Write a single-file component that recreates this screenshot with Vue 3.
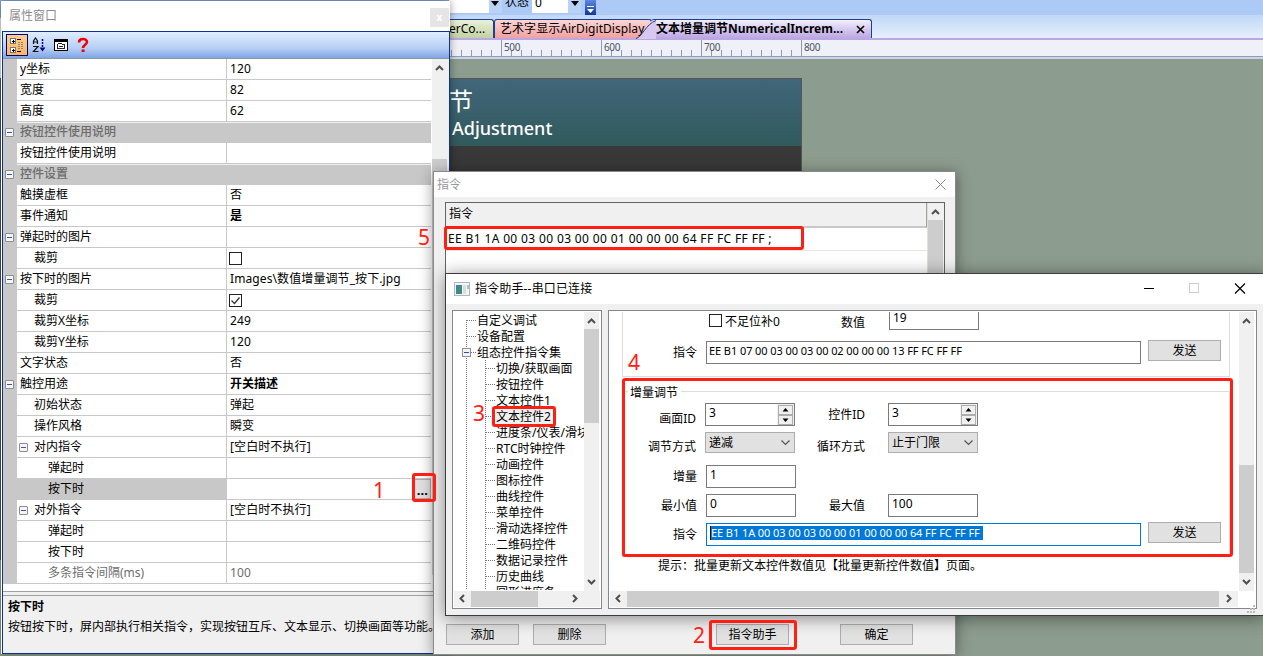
<template>
  <div class="desktop">
    <!-- designer behind the dialogs -->
    <div class="designer">
      <div class="toolbar">
        <div class="combo-end"><svg width="8" height="5"><path d="M0 0h8L4 5z" /></svg></div>
        <span class="state-label">状态</span>
        <div class="state-box">0</div>
        <div class="combo-end"><svg width="8" height="5"><path d="M0 0h8L4 5z" /></svg></div>
        <div class="toolbar-cap">
          <svg width="7" height="8"><path d="M0 0.5h7" stroke="#fff" /><path d="M0 3h7L3.5 7z" fill="#fff" /></svg>
        </div>
      </div>
      <div class="tabs">
        <div class="tab green">erCo...</div>
        <div class="tab pink"><span>艺术字显示AirDigitDisplay</span></div>
        <div class="tab active">
          <svg class="slant" width="20" height="19"><path d="M0 19C5 19 11 4 19 .5H20V19z" fill="#d6c8ee" /><path d="M0 18.5C6 17 10 4 20 .5" fill="none" stroke="#1c3f94" /></svg>
          <span class="tab-text">文本增量调节NumericalIncrem...</span>
          <svg width="9" height="9"><path d="M1 1l7 7M8 1l-7 7" stroke="#000" stroke-width="1.6" /></svg>
        </div>
      </div>
      <svg class="ruler" width="814" height="19">
        <rect width="814" height="17" fill="#f0f1f8" />
        <path d="M0 16.5H814" stroke="#8d9cb8" />
        <path d="M0 18H814" stroke="#ccd4e6" stroke-width="2" />
        <path v-for="t in ticks" :key="t.x" :d="`M${t.x} ${t.top}V16`" stroke="#8f9bb0" />
        <text v-for="n in marks" :key="n.value" :x="n.x" y="11">{{ n.value }}</text>
      </svg>
      <div class="canvas">
        <div class="screen">
          <div class="screen-head">
            <div class="screen-cn">节</div>
            <div class="screen-en">Adjustment</div>
          </div>
        </div>
      </div>
    </div>

    <div class="icon-strip"></div>

    <!-- property window -->
    <div class="props">
      <div class="props-title"><span>属性窗口</span><b>x</b></div>
      <div class="props-frame">
        <div class="props-tools">
          <div class="tool on">
            <svg width="16" height="16" shape-rendering="crispEdges">
              <path d="M1.5 1.5h5v5h-5zM1.5 10.5h5v5h-5z" fill="#fff" stroke="#777" />
              <path d="M3 4h3M4.5 2.5v3M3 13h3M4.5 11.5v3" stroke="#000" />
              <path d="M8 2.5h4M8 14.5h4" stroke="#000" />
              <path d="M9 5.5h6M9 7.5h6M9 9.5h6M9 11.5h6" stroke="#888" stroke-dasharray="2 1" />
            </svg>
          </div>
          <div class="tool">
            <svg width="16" height="16">
              <path d="M2.5 7V4l2-3 2 3v3M2.5 5h4M2 9.5h5L2.5 14.5H7.5" fill="none" stroke="#111" stroke-width="1.2" />
              <path d="M11.5 2v9" stroke="#00008b" stroke-width="1.5" stroke-dasharray="2 1" />
              <path d="M8.5 10.5h6l-3 4z" fill="#00008b" />
            </svg>
          </div>
          <div class="tool">
            <svg width="16" height="16" shape-rendering="crispEdges">
              <path d="M1 2h14v12H1z" fill="#000" /><path d="M2 5h12v8H2z" fill="#fff" />
              <path d="M4.5 7.5l1-1h3l1 1h2v4h-7z" fill="#fff" stroke="#222" /><path d="M6 9.5h4" stroke="#222" />
            </svg>
          </div>
          <div class="tool">
            <svg width="14" height="16"><path d="M3 5.5C3 1 11 1 11 5C11 7.5 7 8 7 11" fill="none" stroke="#f00000" stroke-width="2.6" /><path d="M5.6 12.5h3v2.5h-3z" fill="#f00000" /></svg>
          </div>
        </div>
        <div class="grid-wrap">
          <div class="grid">
            <div v-for="(row, i) in rows" :key="i" class="row" :class="{ cat: row.cat, sel: row.sel, dim: row.dim }">
              <div class="gutter"><i v-if="row.open" class="minus"></i></div>
              <div class="name" :class="'lv' + (row.level || 0)"><i v-if="row.subOpen" class="minus"></i>{{ row.name }}</div>
              <div v-if="!row.cat" class="value" :class="{ bold: row.bold }">
                <svg v-if="row.check !== undefined" width="13" height="13">
                  <rect x=".5" y=".5" width="12" height="12" fill="#fff" stroke="#222" />
                  <path v-if="row.check" d="M2.5 6.5l3 3 5-6" fill="none" stroke="#333" stroke-width="1.3" />
                </svg>
                {{ row.value }}
                <span v-if="row.sel" class="dots">...</span>
              </div>
            </div>
          </div>
          <div class="vbar">
            <svg width="15" height="18"><path d="M4 11l3.5-3.5L11 11" class="arrow" /></svg>
            <div class="props-thumb"></div>
          </div>
        </div>
        <div class="help">
          <b>按下时</b>
          <p>按钮按下时，屏内部执行相关指令，实现按钮互斥、文本显示、切换画面等功能。</p>
        </div>
      </div>
    </div>

    <!-- command list dialog -->
    <div class="dialog cmd">
      <div class="cmd-title">
        <span>指令</span>
        <svg width="11" height="11"><path d="M.5.5l10 10M10.5.5l-10 10" stroke="#888" /></svg>
      </div>
      <div class="cmd-list">
        <div class="cmd-rows">
          <div class="cmd-head">指令</div>
          <div class="cmd-row">EE B1 1A 00 03 00 03 00 00 01 00 00 00 64 FF FC FF FF ;</div>
        </div>
        <div class="vbar cmd-bar">
          <svg width="15" height="17"><path d="M4 11l3.5-3.5L11 11" class="arrow" /></svg>
          <div class="thumb"></div>
        </div>
      </div>
      <div class="cmd-buttons">
        <button>添加</button>
        <button>删除</button>
        <button class="helper-btn">指令助手</button>
        <button class="ok-btn">确定</button>
      </div>
    </div>

    <!-- command helper dialog -->
    <div class="dialog helper">
      <div class="helper-title">
        <svg width="16" height="14">
          <rect x=".5" y=".5" width="15" height="13" fill="#f4f4f4" stroke="#b0b6ba" />
          <rect x="2" y="3" width="6" height="9" fill="#3c8f7c" /><rect x="2" y="3" width="3" height="4" fill="#4a79b8" />
          <rect x="9" y="3" width="3" height="9" fill="#dcdcdc" /><rect x="13" y="3" width="2" height="4" fill="#9fc4dc" />
        </svg>
        <span>指令助手--串口已连接</span>
        <svg class="win-btns" width="102" height="11">
          <path d="M0 5.5h10" stroke="#000" /><rect x="45.5" y=".5" width="9" height="9" fill="none" stroke="#ccc" />
          <path d="M91 .5l10 10M101 .5l-10 10" stroke="#000" stroke-width="1.2" />
        </svg>
      </div>
      <div class="helper-body">
        <div class="panel tree">
          <div class="pane-top">
            <div class="tree-list">
              <div v-for="(item, i) in tree" :key="item" class="node">
                <svg :width="i < 3 ? 24 : 43" height="16" shape-rendering="crispEdges">
                  <path :d="i === 0 ? 'M12.5 8V16' : 'M12.5 0V16'" class="dotline" />
                  <path v-if="i < 3" d="M13 8.5H22" class="dotline" />
                  <path v-else d="M31.5 0V16M32 8.5H41" class="dotline" />
                  <g v-if="i === 2">
                    <rect x="8.5" y="4.5" width="8" height="8" fill="#f4f4f4" stroke="#919191" />
                    <path d="M10 8.5h5" stroke="#3050a0" />
                  </g>
                </svg>
                <span :class="{ picked: i === 6 }">{{ item }}</span>
              </div>
            </div>
            <div class="vbar">
              <svg width="15" height="17"><path d="M4 11l3.5-3.5L11 11" class="arrow" /></svg>
              <div class="thumb tree-thumb"></div>
              <svg class="down" width="15" height="17"><path d="M4 6l3.5 3.5L11 6" class="arrow" /></svg>
            </div>
          </div>
          <div class="hbar">
            <svg width="17" height="15"><path d="M10 4L6.5 7.5L10 11" class="arrow" /></svg>
            <div class="thumb tree-hthumb"></div>
            <svg class="right" width="17" height="15"><path d="M6 4l3.5 3.5L6 11" class="arrow" /></svg>
          </div>
        </div>

        <div class="panel form">
          <div class="pane-top">
            <div class="form-area">
              <div class="group upper">
                <div class="line l-num">
                  <svg class="box" width="13" height="13"><rect x=".5" y=".5" width="12" height="12" fill="#fff" stroke="#222" /></svg>
                  <span class="box-text">不足位补0</span>
                  <label class="mid">数值</label>
                  <div class="field cut">19</div>
                </div>
                <div class="line l-cmd">
                  <label>指令</label>
                  <div class="field wide">EE B1 07 00 03 00 03 00 02 00 00 00 13 FF FC FF FF</div>
                  <button>发送</button>
                </div>
              </div>
              <fieldset class="group inc">
                <legend>增量调节</legend>
                <div class="line l-id">
                  <label class="low">画面ID</label>
                  <div class="field spin">3<span class="spinner"><svg v-for="d in arrows" :key="d" width="15" height="10"><rect x=".5" y=".5" width="14" height="9" fill="#f0f0f0" stroke="#adadad" /><path :d="d" /></svg></span></div>
                  <label class="second">控件ID</label>
                  <div class="field spin">3<span class="spinner"><svg v-for="d in arrows" :key="d" width="15" height="10"><rect x=".5" y=".5" width="14" height="9" fill="#f0f0f0" stroke="#adadad" /><path :d="d" /></svg></span></div>
                </div>
                <div class="line l-mode">
                  <label class="low">调节方式</label>
                  <div class="select">递减<svg width="9" height="6"><path d="M.5.5l4 4 4-4" /></svg></div>
                  <label class="second low">循环方式</label>
                  <div class="select">止于门限<svg width="9" height="6"><path d="M.5.5l4 4 4-4" /></svg></div>
                </div>
                <div class="line l-step">
                  <label>增量</label>
                  <div class="field">1</div>
                </div>
                <div class="line l-range">
                  <label>最小值</label>
                  <div class="field">0</div>
                  <label class="second max">最大值</label>
                  <div class="field">100</div>
                </div>
                <div class="line l-out">
                  <label>指令</label>
                  <div class="field wide focus"><span>EE B1 1A 00 03 00 03 00 00 01 00 00 00 64 FF FC FF FF&nbsp;</span></div>
                  <button>发送</button>
                </div>
              </fieldset>
              <p class="hint">提示：批量更新文本控件数值见【批量更新控件数值】页面。</p>
            </div>
            <div class="vbar">
              <svg width="15" height="17"><path d="M4 11l3.5-3.5L11 11" class="arrow" /></svg>
              <div class="thumb form-thumb"></div>
              <svg class="down" width="15" height="17"><path d="M4 6l3.5 3.5L11 6" class="arrow" /></svg>
            </div>
          </div>
          <div class="hbar">
            <svg width="17" height="15"><path d="M10 4L6.5 7.5L10 11" class="arrow" /></svg>
            <div class="thumb form-hthumb"></div>
            <svg class="right" width="17" height="15"><path d="M6 4l3.5 3.5L6 11" class="arrow" /></svg>
          </div>
        </div>
      </div>
      <svg class="grip" width="8" height="8"><path d="M6 0h2v2H6zM3 3h2v2H3zM6 3h2v2H6zM0 6h2v2H0zM3 6h2v2H3zM6 6h2v2H6z" fill="#bbb" /></svg>
    </div>

    <!-- step marks over the windows -->
    <div class="mark m1"></div>
    <div class="mark m2"></div>
    <div class="mark m3"></div>
    <div class="mark m4"></div>
    <div class="mark m5"></div>
    <div v-for="n in 5" :key="n" class="step" :class="'s' + n">{{ n }}</div>
  </div>
</template>

<script setup>
const rows = [
  { name: 'y坐标', value: '120' },
  { name: '宽度', value: '82' },
  { name: '高度', value: '62' },
  { name: '按钮控件使用说明', cat: true, open: true },
  { name: '按钮控件使用说明' },
  { name: '控件设置', cat: true, open: true },
  { name: '触摸虚框', value: '否' },
  { name: '事件通知', value: '是', bold: true },
  { name: '弹起时的图片', open: true },
  { name: '裁剪', level: 1, check: false },
  { name: '按下时的图片', value: 'Images\\数值增量调节_按下.jpg', open: true },
  { name: '裁剪', level: 1, check: true },
  { name: '裁剪X坐标', level: 1, value: '249' },
  { name: '裁剪Y坐标', level: 1, value: '120' },
  { name: '文字状态', value: '否' },
  { name: '触控用途', value: '开关描述', bold: true, open: true },
  { name: '初始状态', level: 1, value: '弹起' },
  { name: '操作风格', level: 1, value: '瞬变' },
  { name: '对内指令', level: 1, value: '[空白时不执行]', subOpen: true },
  { name: '弹起时', level: 2 },
  { name: '按下时', level: 2, sel: true },
  { name: '对外指令', level: 1, value: '[空白时不执行]', subOpen: true },
  { name: '弹起时', level: 2 },
  { name: '按下时', level: 2 },
  { name: '多条指令间隔(ms)', level: 2, value: '100', dim: true }
]

const tree = [
  '自定义调试', '设备配置', '组态控件指令集', '切换/获取画面', '按钮控件', '文本控件1',
  '文本控件2', '进度条/仪表/滑块', 'RTC时钟控件', '动画控件', '图标控件', '曲线控件',
  '菜单控件', '滑动选择控件', '二维码控件', '数据记录控件', '历史曲线', '圆形进度条'
]

// up and down triangles of the number fields
const arrows = ['M4.5 6.5h6L7.5 3z', 'M4.5 3.5h6L7.5 7z']

// ruler: one tick every 10 units, a long one every 100
const ticks = []
for (let i = 0; i <= 35; i++) {
  ticks.push({ x: 2.5 + i * 10, top: i % 10 === 5 ? 0 : 10 })
}
const marks = [500, 600, 700, 800].map((value, i) => ({ value, x: 55 + i * 100 }))
</script>

<style>
body {
  overflow: hidden;
}
</style>

<style scoped>
.desktop {
  position: relative;
  width: 1263px;
  height: 656px;
  overflow: hidden;
  background: #8c9c8e;
  color: #000;
  font: 12px/16px "Noto Sans", "Noto Sans CJK SC", sans-serif;
  white-space: nowrap;
}

.desktop * {
  box-sizing: border-box;
}

svg {
  display: block;
  flex: none;
}

p {
  margin: 0;
}

/* designer */
.designer {
  margin-left: 449px;
}

.toolbar {
  display: flex;
  height: 16px;
  background: #adcaf6;
  border-bottom: 1px solid #c4d8f5;
  overflow: hidden;
}

.toolbar .combo-end {
  width: 13px;
  height: 13px;
  padding: 1px 3px;
  background: #b9d3f7;
}

.toolbar .combo-end:first-child {
  width: 53px;
  padding-left: 42px;
  background: linear-gradient(90deg, #fff 40px, #b9d3f7 40px);
}

.state-label {
  margin: -6px 3px 0 3px;
}

.state-box {
  width: 36px;
  height: 13px;
  padding-left: 3px;
  line-height: 6px;
  background: #fff;
}

.toolbar-cap {
  width: 11px;
  height: 16px;
  margin-left: 4px;
  padding: 6px 2px;
  background: linear-gradient(#5d8ae0, #0b318e);
}

.tabs {
  display: flex;
  height: 24px;
  padding-top: 3px;
  background: linear-gradient(#c1d8f7, #e6effc);
  border-bottom: 2px solid #bba7e3;
}

.tab {
  height: 19px;
  border: 1px solid #1c3f94;
  border-bottom: 0;
  border-radius: 3px 3px 0 0;
  line-height: 18px;
}

.tab.green {
  width: 45px;
  border-left: 0;
  border-radius: 0 3px 0 0;
  background: linear-gradient(#eaf1da, #c1d2a0);
}

.tab.pink {
  width: 158px;
  padding-left: 5px;
  overflow: hidden;
  background: linear-gradient(#fbd6d6, #f1a0a0);
}

.tab.pink span {
  letter-spacing: 0.05px;
}

.tab.active {
  display: flex;
  align-items: center;
  width: 221px;
  margin-left: -1px;
  border-left: 0;
  background: linear-gradient(#f2effb, #bba7e3);
  font-weight: bold;
}

.slant {
  margin: 0 -12px 0 -15px;
}

.tab-text {
  width: 200px;
  margin-left: 12px;
}

.ruler text {
  font-size: 10px;
  letter-spacing: -0.4px;
  fill: #4b5563;
}

.canvas {
  padding-top: 19px;
}

.screen {
  width: 353px;
  height: 200px;
  border: 1px solid #555;
  border-left: 0;
  background: #383838;
}

.screen-head {
  height: 67px;
  padding-top: 5px;
  background: linear-gradient(#41667a, #315a5c);
  color: #fff;
}

.screen-cn {
  height: 31px;
  font-size: 24px;
  line-height: 34px;
}

.screen-en {
  padding-left: 3px;
  font-size: 18px;
  font-weight: 500;
  line-height: 26px;
}

.icon-strip {
  position: absolute;
  left: 0;
  top: 0;
  width: 449px;
  height: 656px;
  background: linear-gradient(#86a4d8 0 18px, #dde8f8 18px 78px, #4a4f57 78px 560px, #8c9c8e 560px);
}

/* property window */
.props {
  position: absolute;
  left: 1px;
  top: 1px;
  width: 449px;
  height: 653px;
  background: #fff;
  box-shadow: 0 0 8px rgba(0, 0, 0, 0.4);
}

.props-title {
  display: flex;
  justify-content: space-between;
  height: 30px;
  padding: 7px 1px 0 8px;
  color: #8e8e8e;
}

.props-title b {
  width: 19px;
  height: 19px;
  background: #e5e5e5;
  color: #fff;
  font-size: 10px;
  line-height: 18px;
  text-align: center;
}

.props-frame {
  display: flex;
  flex-direction: column;
  height: 623px;
  margin-left: 1px;
  border: 1px solid #0a3494;
  background: #f0f0f0;
}

.props-tools {
  display: flex;
  align-items: center;
  gap: 0;
  height: 27px;
  padding-left: 3px;
  border-bottom: 1px solid #8a95a8;
  background: linear-gradient(#e0edfe, #b8d0f5 60%, #7fa6e6);
}

.tool {
  display: flex;
  align-items: center;
  justify-content: center;
  width: 22px;
  height: 22px;
}

.tool.on {
  border: 1px solid #00007f;
  background: linear-gradient(#ffd08e, #ffb45c);
}

.grid-wrap {
  display: flex;
  height: 533px;
  border-bottom: 1px solid #a0a0a0;
  background: #fff;
}

.grid {
  width: 428px;
  margin-right: 1px;
}

.row {
  display: flex;
  height: 21px;
}

.gutter {
  display: flex;
  align-items: center;
  width: 14px;
  padding-left: 2px;
  background: #c8c8c8;
}

.minus {
  flex: none;
  width: 9px;
  height: 9px;
  border: 1px solid #8d8d8d;
  border-radius: 1px;
  background: linear-gradient(#3b58a8, #3b58a8) center / 5px 1px no-repeat #f5f5f5;
}

.name {
  width: 209px;
  padding-left: 3px;
  border-bottom: 1px solid #c8c8c8;
  line-height: 20px;
}

.name .minus {
  display: inline-block;
  margin: 0 6px -1px -15px;
}

.name.lv1 {
  padding-left: 17px;
}

.name.lv2 {
  padding-left: 31px;
}

.value {
  display: flex;
  align-items: center;
  flex: 1;
  padding-left: 3px;
  border-left: 1px solid #c8c8c8;
  border-bottom: 1px solid #c8c8c8;
  letter-spacing: 0.1px;
}

.value svg {
  margin: 1px 0 0 -1px;
}

.bold {
  font-weight: bold;
  letter-spacing: 0;
}

.dots {
  width: 17px;
  height: 20px;
  margin-left: auto;
  border: 1px solid #adadad;
  background: #e1e1e1;
  font-size: 13px;
  font-weight: bold;
  line-height: 20px;
  text-align: center;
}

.cat .name {
  flex: 1;
  border-top: 1px solid #f0f0f0;
  border-bottom: 0;
  background: #c8c8c8;
  color: #6d6d6d;
  font-weight: 500;
  line-height: 18px;
}

.sel .name {
  background: #c8c8c8;
}

.dim {
  color: #6d6d6d;
}

.vbar {
  display: flex;
  flex-direction: column;
  flex: none;
  width: 17px;
  background: #f0f0f0;
}

.arrow {
  fill: none;
  stroke: #505050;
  stroke-width: 2;
}

.thumb {
  flex: none;
  background: #cdcdcd;
}

.props-thumb {
  height: 416px;
  margin: 82px 2px 0 0;
  background: #cdcdcd;
}

.help {
  flex: 1;
  margin-top: 3px;
  padding: 3px 5px;
  border-top: 1px solid #a0a0a0;
}

.help p {
  margin-top: 4px;
}

/* dialogs */
.dialog {
  position: absolute;
  background: #f0f0f0;
}

.cmd {
  left: 433px;
  top: 171px;
  width: 523px;
  height: 484px;
  border: 1px solid #8a8a8a;
  box-shadow: 0 2px 14px rgba(0, 0, 0, 0.4);
}

.cmd-title {
  display: flex;
  align-items: center;
  justify-content: space-between;
  height: 25px;
  padding: 0 9px 0 3px;
  background: #fff;
  color: #999;
}

.cmd-list {
  display: flex;
  height: 400px;
  margin: 5px 10px 0 11px;
  border: 1px solid #646464;
  background: #fff;
}

.cmd-rows {
  flex: 1;
  border-right: 1px solid #e0e0d8;
}

.cmd-head {
  height: 25px;
  padding: 3px;
  border-right: 1px solid #a0a0a0;
  border-bottom: 2px solid #c8c8c8;
  background: #f0f0f0;
}

.cmd-row {
  height: 23px;
  padding-left: 2px;
  border-bottom: 1px solid #e6e6dc;
  letter-spacing: 0.36px;
  line-height: 21px;
}

.cmd-bar {
  width: 16px;
}

.cmd-bar .thumb {
  width: 15px;
  height: 370px;
}

.cmd-buttons {
  display: flex;
  height: 21px;
  margin: 22px 0 0 12px;
}

button {
  width: 73px;
  height: 21px;
  padding: 1px 0 0;
  border: 1px solid #adadad;
  border-radius: 0;
  background: #e1e1e1;
  color: #000;
  font: inherit;
  line-height: 18px;
}

.cmd-buttons button {
  margin-right: 14px;
}

.cmd-buttons .helper-btn {
  margin: 0 51px 0 96px;
}

.cmd-buttons .ok-btn {
  margin: 0;
}

.helper {
  left: 445px;
  top: 273px;
  width: 820px;
  height: 343px;
  border: 1px solid #3c3c3c;
  box-shadow: 0 2px 16px rgba(0, 0, 0, 0.45);
}

.helper-title {
  display: flex;
  align-items: center;
  height: 30px;
  padding: 0 19px 1px 8px;
  background: #fff;
}

.helper-title span {
  margin-left: 5px;
  letter-spacing: 0.15px;
}

.win-btns {
  margin-left: auto;
  margin-right: -1px;
}

.helper-body {
  display: flex;
  gap: 6px;
  padding: 6px 0 0 6px;
}

.panel {
  height: 299px;
  padding: 1px;
  border: 1px solid #828790;
  background: #fff;
}

.pane-top {
  display: flex;
  height: 279px;
}

.tree {
  width: 150px;
}

.tree .vbar,
.form .vbar {
  width: 15px;
}

.tree-list {
  width: 130px;
  height: 278px;
  overflow: hidden;
}

.node {
  display: flex;
  height: 16px;
}

.node span {
  height: 16px;
  margin-left: -1px;
  line-height: 18px;
}

.dotline {
  stroke: #777;
  stroke-dasharray: 1 1;
}

.picked {
  background: #f0f0f0;
}

.tree-thumb {
  height: 94px;
}

.down {
  margin-top: auto;
}

.hbar {
  display: flex;
  height: 16px;
  background: #f0f0f0;
}

.tree-hthumb {
  width: 67px;
}

.hbar .right {
  margin-left: auto;
}

.tree .right {
  margin-right: 16px;
}

.form {
  width: 649px;
}

.form-area {
  width: 629px;
  height: 279px;
  overflow: hidden;
}

.form-thumb {
  height: 108px;
  margin-top: 136px;
}

.form .hbar {
  width: 628px;
}

.form-hthumb {
  width: 592px;
}

.group {
  width: 608px;
  margin: 0 0 0 12px;
  border: 1px solid #dcdcdc;
}

.line {
  display: flex;
  align-items: flex-start;
}

.line label {
  width: 74px;
  margin-right: 9px;
  padding-top: 4px;
  text-align: right;
}

.field {
  width: 90px;
  height: 23px;
  padding-left: 3px;
  border: 1px solid #7a7a7a;
  background: #fff;
  line-height: 18px;
}

.upper {
  height: 65px;
  border-top: 0;
}

.l-num {
  height: 29px;
}

.box {
  margin: 2px 0 0 86px;
}

.box-text {
  width: 82px;
  padding-top: 2px;
  margin-left: 3px;
}

.line .mid {
  width: 58px;
  margin-right: 24px;
  margin-left: 0;
  padding-top: 3px;
}

.field.cut {
  height: 18px;
  border-top: 0;
  line-height: 12px;
}

.field.wide {
  width: 435px;
  padding-left: 2px;
  font-size: 11px;
  letter-spacing: -0.08px;
}

.line button {
  margin: -1px 0 0 7px;
}

.inc {
  height: 172px;
  margin-top: 8px;
  padding: 0;
}

.inc legend {
  height: 13px;
  margin-left: 5px;
  padding: 0 3px 0 2px;
  line-height: 15px;
}

.line .low {
  padding-top: 8px;
}

.line .select ~ .low,
.l-mode .low {
  padding-top: 7px;
}

.l-id,
.l-mode {
  margin-left: -1px;
}

.line .second {
  width: 70px;
  margin-right: 23px;
}

.line .max {
  width: 69px;
}

.l-id {
  height: 29px;
  margin-top: 5px;
}

.spin {
  display: flex;
  justify-content: space-between;
}

.spinner {
  display: flex;
  flex-direction: column;
  width: 17px;
  padding: 1px 0 0 1px;
  background: #f0f0f0;
}

.select {
  display: flex;
  align-items: center;
  justify-content: space-between;
  width: 90px;
  height: 21px;
  padding: 1px 4px 0 3px;
  border: 1px solid #adadad;
  background: #e1e1e1;
}

.select path {
  fill: none;
  stroke: #555;
  stroke-width: 1.2;
}

.l-mode {
  height: 33px;
}

.l-step {
  height: 29px;
}

.l-range {
  height: 29px;
}

.line .field.focus {
  padding: 2px 0 0 3px;
  border-color: #0078d7;
  line-height: 13px;
}

.focus span {
  display: inline-block;
  height: 14px;
  border-left: 1px solid #000;
  background: #0078d7;
  color: #fff;
}

.hint {
  height: 18px;
  margin: 0 0 0 48px;
  line-height: 18px;
}

.grip {
  position: absolute;
  right: 9px;
  bottom: 2px;
}

/* step marks */
.mark {
  position: absolute;
  border: 3px solid #ff2013;
  border-radius: 3px;
}

.m1 {
  left: 412px;
  top: 473px;
  width: 24px;
  height: 29px;
}

.m2 {
  left: 709px;
  top: 620px;
  width: 88px;
  height: 30px;
}

.m3 {
  left: 492px;
  top: 406px;
  width: 64px;
  height: 21px;
}

.m4 {
  left: 622px;
  top: 378px;
  width: 611px;
  height: 179px;
}

.m5 {
  left: 444px;
  top: 226px;
  width: 360px;
  height: 24px;
}

.step {
  position: absolute;
  color: #ff2013;
  font-size: 21px;
  line-height: 24px;
}

.s1 {
  left: 373px;
  top: 478px;
}

.s2 {
  left: 693px;
  top: 623px;
}

.s3 {
  left: 473px;
  top: 401px;
}

.s4 {
  left: 628px;
  top: 350px;
}

.s5 {
  left: 418px;
  top: 225px;
}
</style>
